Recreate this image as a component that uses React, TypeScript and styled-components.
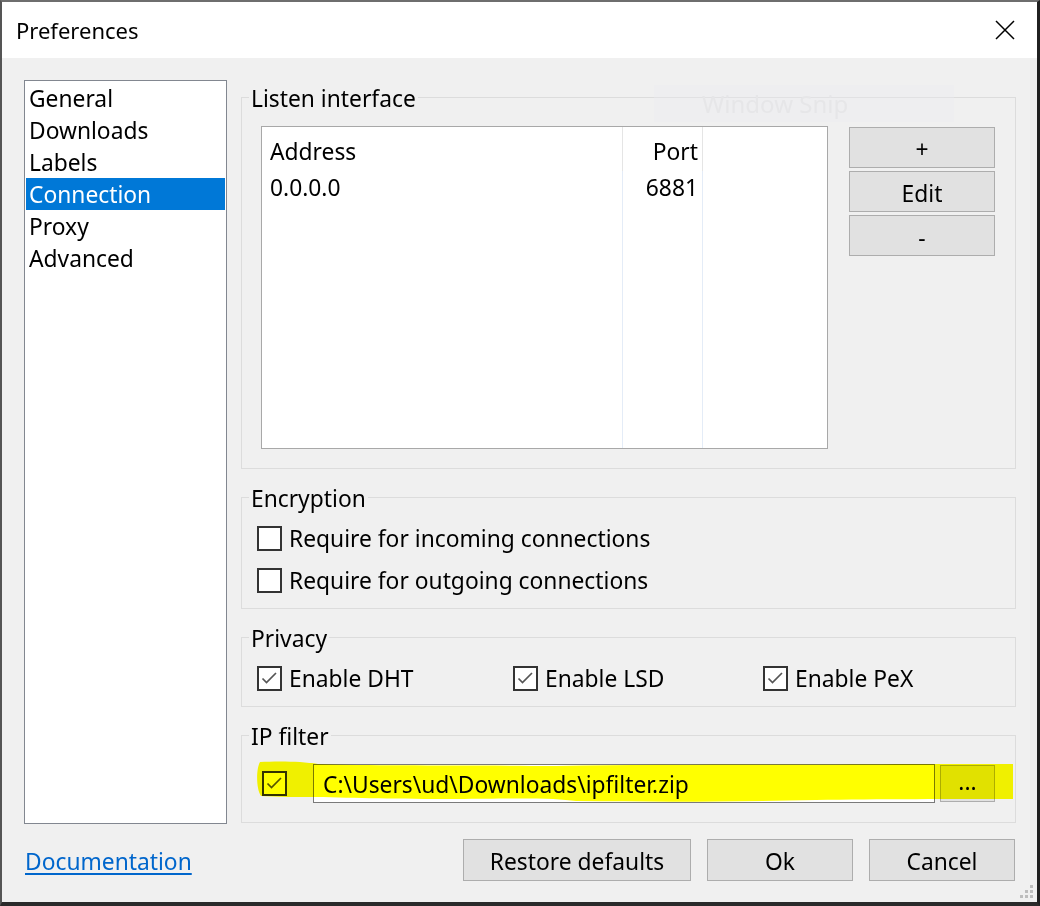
import React from "react";
import styled, { createGlobalStyle } from "styled-components";

const FONT = `"Noto Sans", "Segoe UI", sans-serif`;

const Global = createGlobalStyle`
  html, body { margin: 0; padding: 0; background: #1e1e1e; }
  body { font-family: ${FONT}; font-size: 22.8px; color: #000; }
  * { box-sizing: border-box; }
`;

const Frame = styled.div`
  position: relative;
  width: 1040px;
  height: 906px;
  border-style: solid;
  border-color: #6e6e6e #202020 #2a2a2a #555;
  border-width: 2px 3px 4px 2px;
  display: flex;
  flex-direction: column;
  background: #f0f0f0;
  overflow: hidden;
`;

const TitleBar = styled.div`
  height: 56px;
  flex-shrink: 0;
  background: #fff;
  display: flex;
  align-items: center;
  justify-content: space-between;
  padding: 0 22px 0 14px;
  font-size: 22px;
`;

const Body = styled.div`
  flex: 1;
  display: grid;
  grid-template-columns: 203px 775px;
  grid-template-rows: 744px 42px;
  align-content: start;
  column-gap: 14px;
  row-gap: 15px;
  padding: 22px 21px 0 22px;
`;

const List = styled.div`
  background: #fff;
  border: 1px solid #828790;
  padding: 1px;
  display: flex;
  flex-direction: column;
`;

const ListItem = styled.div<{ $selected?: boolean }>`
  height: 32px;
  line-height: 34px;
  padding-left: 3px;
  background: ${(p) => (p.$selected ? "#0078d7" : "transparent")};
  color: ${(p) => (p.$selected ? "#fff" : "#000")};
  white-space: nowrap;
`;

const Panel = styled.div`
  display: flex;
  flex-direction: column;
  gap: 14px;
  margin-top: 3px;
`;

const Group = styled.fieldset`
  position: relative;
  margin: 0;
  padding: 0;
  min-width: 0;
  border: 1px solid #dcdcdc;
`;

const Legend = styled.legend`
  padding: 3px 2px 0;
  margin-left: 7px;
  line-height: 25px;
  font-size: 22.8px;
`;

const ListenContent = styled.div`
  display: grid;
  grid-template-columns: 567px 146px;
  column-gap: 21px;
  padding: 15px 20px 19px 19px;
  align-items: start;
`;

const Table = styled.div`
  height: 323px;
  background: #fff;
  border: 1px solid #a8a8a8;
  display: grid;
  grid-template-columns: 361px 80px 1fr;
`;

const Column = styled.div<{ $right?: boolean }>`
  display: flex;
  flex-direction: column;
  text-align: ${(p) => (p.$right ? "right" : "left")};
`;

const HeaderCell = styled.div<{ $last?: boolean }>`
  height: 44px;
  line-height: 44px;
  padding: 3px 4px 0 8px;
  border-right: ${(p) => (p.$last ? "none" : "1px solid #e5e5e5")};
`;

const Cell = styled.div<{ $last?: boolean; $fill?: boolean }>`
  height: ${(p) => (p.$fill ? "auto" : "34px")};
  flex: ${(p) => (p.$fill ? 1 : "none")};
  line-height: 34px;
  padding: 0 4px 0 8px;
  border-right: ${(p) => (p.$last ? "none" : "1px solid #e4ecf7")};
`;

const SideButtons = styled.div`
  display: flex;
  flex-direction: column;
  gap: 3px;
  margin-top: 1px;
`;

const Button = styled.button<{ $w?: number; $h?: number }>`
  width: ${(p) => (p.$w ? `${p.$w}px` : "100%")};
  height: ${(p) => p.$h ?? 41}px;
  background: #e1e1e1;
  border: 1px solid #adadad;
  font-family: ${FONT};
  font-size: 22.8px;
  color: #000;
  padding: 3px 0 0;
  display: flex;
  align-items: center;
  justify-content: center;
`;

const SnipGhost = styled.div`
  position: absolute;
  left: 412px;
  top: -26px;
  width: 300px;
  height: 37px;
  background: rgba(234, 234, 242, 0.35);
  color: #e6e6e8;
  font-size: 24px;
  line-height: 37px;
  padding-left: 48px;
  pointer-events: none;
`;

const CheckContent = styled.div<{ $cols?: string }>`
  display: grid;
  grid-template-columns: ${(p) => p.$cols ?? "1fr"};
  padding: 6px 15px 7px 15px;
`;

const CheckRow = styled.label`
  height: 42px;
  display: flex;
  align-items: center;
  gap: 7px;
  white-space: nowrap;
`;

const Box = styled.span`
  width: 25px;
  height: 25px;
  border: 2px solid #333;
  background: #fff;
  display: inline-flex;
  align-items: center;
  justify-content: center;
  flex-shrink: 0;
`;

const FilterContent = styled.div`
  position: relative;
  display: grid;
  grid-template-columns: 25px 1fr auto;
  align-items: center;
  padding: 15px 20px 19px 20px;
`;

const PathInput = styled.div`
  height: 39px;
  margin-left: 26px;
  background: #fff;
  border: 1px solid #7a7a7a;
  line-height: 39px;
  padding-left: 9px;
  white-space: nowrap;
`;

const BrowseButton = styled(Button)`
  margin-left: 5px;
  padding: 0 0 4px;
`;

const Highlight = styled.svg`
  position: absolute;
  left: 14px;
  top: 12px;
  width: 757px;
  height: 42px;
  mix-blend-mode: multiply;
  pointer-events: none;
`;

const BottomBar = styled.div`
  grid-column: 1 / span 2;
  display: flex;
  align-items: center;
  justify-content: space-between;
  padding-right: 1px;
`;

const DocLink = styled.a`
  color: #0066cc;
  text-decoration: underline;
  text-underline-offset: 3px;
  margin: 2px 0 0 1px;
  font-size: 22.8px;
`;

const ButtonRow = styled.div`
  display: flex;
  gap: 16px;
`;

const Grip = styled.svg`
  position: absolute;
  right: 2px;
  bottom: 2px;
`;

const Check = ({ on }: { on?: boolean }) => (
  <Box>
    {on && (
      <svg width="21" height="21" viewBox="0 0 21 21">
        <polyline points="3.5,10.5 7.5,14.5 17,5" fill="none" stroke="#555" strokeWidth="1.7" />
      </svg>
    )}
  </Box>
);

export default function App() {
  return (
    <>
      <Global />
      <Frame>
        <TitleBar>
          <span>Preferences</span>
          <svg width="20" height="20" viewBox="0 0 20 20">
            <path d="M1 1 L19 19 M19 1 L1 19" stroke="#000" strokeWidth="1.5" />
          </svg>
        </TitleBar>
        <Body>
          <List>
            <ListItem>General</ListItem>
            <ListItem>Downloads</ListItem>
            <ListItem>Labels</ListItem>
            <ListItem $selected>Connection</ListItem>
            <ListItem>Proxy</ListItem>
            <ListItem>Advanced</ListItem>
          </List>
          <Panel>
            <Group>
              <Legend>Listen interface</Legend>
              <SnipGhost>Window Snip</SnipGhost>
              <ListenContent>
                <Table>
                  <Column>
                    <HeaderCell>Address</HeaderCell>
                    <Cell>0.0.0.0</Cell>
                    <Cell $fill />
                  </Column>
                  <Column $right>
                    <HeaderCell>Port</HeaderCell>
                    <Cell>6881</Cell>
                    <Cell $fill />
                  </Column>
                  <Column>
                    <HeaderCell $last />
                    <Cell $last $fill />
                  </Column>
                </Table>
                <SideButtons>
                  <Button>+</Button>
                  <Button>Edit</Button>
                  <Button>-</Button>
                </SideButtons>
              </ListenContent>
            </Group>
            <Group>
              <Legend>Encryption</Legend>
              <CheckContent>
                <CheckRow>
                  <Check />
                  Require for incoming connections
                </CheckRow>
                <CheckRow>
                  <Check />
                  Require for outgoing connections
                </CheckRow>
              </CheckContent>
            </Group>
            <Group>
              <Legend>Privacy</Legend>
              <CheckContent $cols="256px 250px 1fr">
                <CheckRow>
                  <Check on />
                  Enable DHT
                </CheckRow>
                <CheckRow>
                  <Check on />
                  Enable LSD
                </CheckRow>
                <CheckRow>
                  <Check on />
                  Enable PeX
                </CheckRow>
              </CheckContent>
            </Group>
            <Group>
              <Legend>IP filter</Legend>
              <FilterContent>
                <Check on />
                <PathInput>C:\Users\ud\Downloads\ipfilter.zip</PathInput>
                <BrowseButton $w={55} $h={37}>...</BrowseButton>
                <Highlight viewBox="0 0 757 42" preserveAspectRatio="none">
                  <path
                    d="M4,1 C20,0 45,0 62,3 C120,5 200,4 300,5 C420,3 560,4 640,3 C700,3 740,3 757,3 L757,38 C700,38 620,38 560,39 C470,41 400,41 320,40 C300,37 270,37 200,38 C140,38 100,37 60,36 C40,36 20,36 5,35 C0,28 0,8 4,1 Z"
                    fill="#ffff00"
                  />
                </Highlight>
              </FilterContent>
            </Group>
          </Panel>
          <BottomBar>
            <DocLink href="#">Documentation</DocLink>
            <ButtonRow>
              <Button $w={228} $h={42}>Restore defaults</Button>
              <Button $w={146} $h={42}>Ok</Button>
              <Button $w={146} $h={42}>Cancel</Button>
            </ButtonRow>
          </BottomBar>
        </Body>
        <Grip width="16" height="16" viewBox="0 0 16 16">
          {[
            [11, 1],
            [6, 6],
            [11, 6],
            [1, 11],
            [6, 11],
            [11, 11],
          ].map(([x, y], i) => (
            <rect key={i} x={x} y={y} width="3" height="3" fill="#bdbdbd" />
          ))}
        </Grip>
      </Frame>
    </>
  );
}
